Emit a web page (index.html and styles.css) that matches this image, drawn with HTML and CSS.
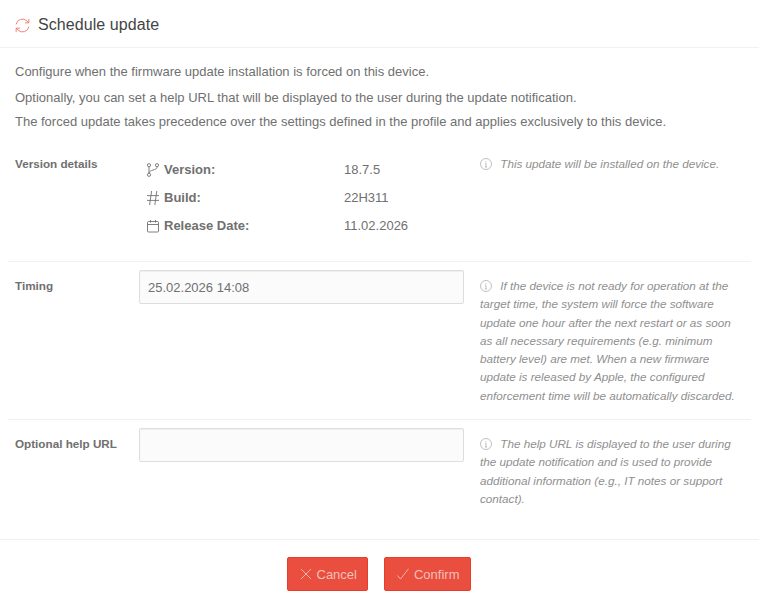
FILE: index.html
```html
<!DOCTYPE html>
<html lang="en">
<head>
  <meta charset="UTF-8" />
  <title>Schedule update</title>
  <link rel="stylesheet" href="styles.css">
</head>
<body>

  <div class="header">
    <svg class="header-icon" viewBox="0 0 16 16"><path d="M1.2 6.8A6.8 6.8 0 0 1 12.8 3.2L14.8 5.2M14.8 1V5.2H10.6M14.8 9.2A6.8 6.8 0 0 1 3.2 12.8L1.2 10.8M1.2 15V10.8H5.4"/></svg>
    <h1>Schedule update</h1>
  </div>

  <div class="intro">
    <p>Configure when the firmware update installation is forced on this device.</p>
    <p>Optionally, you can set a help URL that will be displayed to the user during the update notification.</p>
    <p>The forced update takes precedence over the settings defined in the profile and applies exclusively to this device.</p>
  </div>

  <div class="form">
    <div class="row row-details">
      <label>Version details</label>
      <div class="details">
        <div class="detail">
          <span class="detail-name">
            <svg class="detail-icon" viewBox="0 0 14 14"><circle cx="3" cy="2.2" r="1.6"/><circle cx="3" cy="11.8" r="1.6"/><circle cx="11" cy="2.2" r="1.6"/><path d="M3 3.8V10.2M11 3.8V4.4C11 7.4 3.4 6.4 3 10.2"/></svg>
            Version:
          </span>
          <span>18.7.5</span>
        </div>
        <div class="detail">
          <span class="detail-name">
            <svg class="detail-icon" viewBox="0 0 14 14"><path d="M5.6 0L3.6 14M10.8 0L8.8 14M1 4.6H13M1 9.4H13"/></svg>
            Build:
          </span>
          <span>22H311</span>
        </div>
        <div class="detail">
          <span class="detail-name">
            <svg class="detail-icon" viewBox="0 0 14 14"><rect x="1.5" y="2.5" width="11" height="10.5" rx="1"/><path d="M1.5 5.5H12.5M4.5 1V3.5M9.5 1V3.5"/></svg>
            Release Date:
          </span>
          <span>11.02.2026</span>
        </div>
      </div>
      <p class="help">
        <svg class="info" viewBox="0 0 12 12"><circle cx="6" cy="6" r="5.5"/><path d="M6 5.2V9M5 9H7M5 5.2H6M6 3V3.8"/></svg>
        This update will be installed on the device.
      </p>
    </div>

    <div class="row row-timing">
      <label>Timing</label>
      <input class="field" type="text" value="25.02.2026 14:08">
      <p class="help">
        <svg class="info" viewBox="0 0 12 12"><circle cx="6" cy="6" r="5.5"/><path d="M6 5.2V9M5 9H7M5 5.2H6M6 3V3.8"/></svg>
        If the device is not ready for operation at the target time, the system will force the software update one hour after the next restart or as soon as all necessary requirements (e.g. minimum battery level) are met. When a new firmware update is released by Apple, the configured enforcement time will be automatically discarded.
      </p>
    </div>

    <div class="row row-url">
      <label>Optional help URL</label>
      <input class="field" type="text">
      <p class="help">
        <svg class="info" viewBox="0 0 12 12"><circle cx="6" cy="6" r="5.5"/><path d="M6 5.2V9M5 9H7M5 5.2H6M6 3V3.8"/></svg>
        The help URL is displayed to the user during the update notification and is used to provide additional information (e.g., IT notes or support contact).
      </p>
    </div>
  </div>

  <div class="footer">
    <button class="btn">
      <svg class="btn-icon" viewBox="0 0 12 12"><path d="M1 1L11 11M11 1L1 11"/></svg>
      Cancel
    </button>
    <button class="btn btn-confirm">
      <svg class="btn-icon" viewBox="0 0 12 12"><path d="M0.5 7.5L3.5 11L11.5 0.8"/></svg>
      Confirm
    </button>
  </div>

</body>
</html>
```

FILE: styles.css
```css
body {
  margin: 0;
  font-family: "Liberation Sans", Arial, sans-serif;
  font-size: 13px;
  line-height: 18.5px;
  color: #707070;
  background-color: #fff;
}

.header {
  display: flex;
  align-items: center;
  box-sizing: border-box;
  height: 48px;
  padding: 3px 0 0 15px;
  border-bottom: 1px solid #f1f1f1;
}

.header-icon {
  width: 15px;
  height: 15px;
  margin-right: 8px;
  fill: none;
  stroke: #f27b6f;
  stroke-width: 1;
}

h1 {
  margin: 0;
  font-size: 16px;
  letter-spacing: 0.07px;
  font-weight: 400;
  color: #444;
}

.intro {
  padding: 14px 15px 0;
  line-height: 19px;
}

.intro p {
  margin: 0 0 7px;
}

.intro p + p {
  margin-bottom: 5px;
}

.form {
  margin: 16px 8px 0;
}

.row {
  display: grid;
  grid-template-columns: 124px 341px 1fr;
  padding: 8px 7px 0;
  border-top: 1px solid #f1f1f1;
}

.row-details {
  height: 106px;
  border-top: none;
}

.row-timing {
  height: 149px;
}

.row-url {
  height: 111px;
}

label {
  font-size: 11.7px;
  font-weight: 700;
}

.row-timing label,
.row-url label {
  margin-top: 7px;
}

.details {
  padding: 1px 0 0 7px;
}

.detail {
  display: flex;
  align-items: center;
  height: 28px;
}

.detail-name {
  display: flex;
  align-items: center;
  width: 198px;
  font-weight: 700;
}

.detail-icon {
  flex-shrink: 0;
  width: 14px;
  height: 14px;
  margin: 0 4px 1px 0;
  fill: none;
  stroke: #707070;
  stroke-width: 0.9;
}

.field {
  box-sizing: border-box;
  width: 325px;
  height: 34px;
  padding: 6px 8px;
  font-family: inherit;
  font-size: 13px;
  color: #707070;
  background-color: #fbfbfb;
  border: 1px solid #dedede;
  border-radius: 2px;
  box-shadow: inset 0 1px 1px rgba(0, 0, 0, 0.05);
}

.help {
  margin: 0;
  font-size: 11.7px;
  line-height: 18.3px;
  font-style: italic;
  color: #8f8f8f;
}

.row-timing .help,
.row-url .help {
  margin-top: 7px;
}

.info {
  width: 12px;
  height: 12px;
  margin-right: 5px;
  vertical-align: -2px;
  fill: none;
  stroke: #a5a5a5;
  stroke-width: 0.7;
}

.footer {
  display: flex;
  justify-content: center;
  gap: 16px;
  padding: 17px 1px 0 0;
  border-top: 1px solid #f1f1f1;
}

.btn {
  display: flex;
  align-items: center;
  height: 34px;
  padding: 0 10px 0 12px;
  font-family: inherit;
  font-size: 13px;
  color: #f3c0ba;
  background-color: #ea4e3e;
  border: 1px solid #e63d2c;
  border-radius: 2px;
}

.btn-confirm {
  padding-right: 11px;
}

.btn-icon {
  width: 12px;
  height: 12px;
  margin-right: 5px;
  fill: none;
  stroke: #f3c0ba;
  stroke-width: 0.9;
}
```
